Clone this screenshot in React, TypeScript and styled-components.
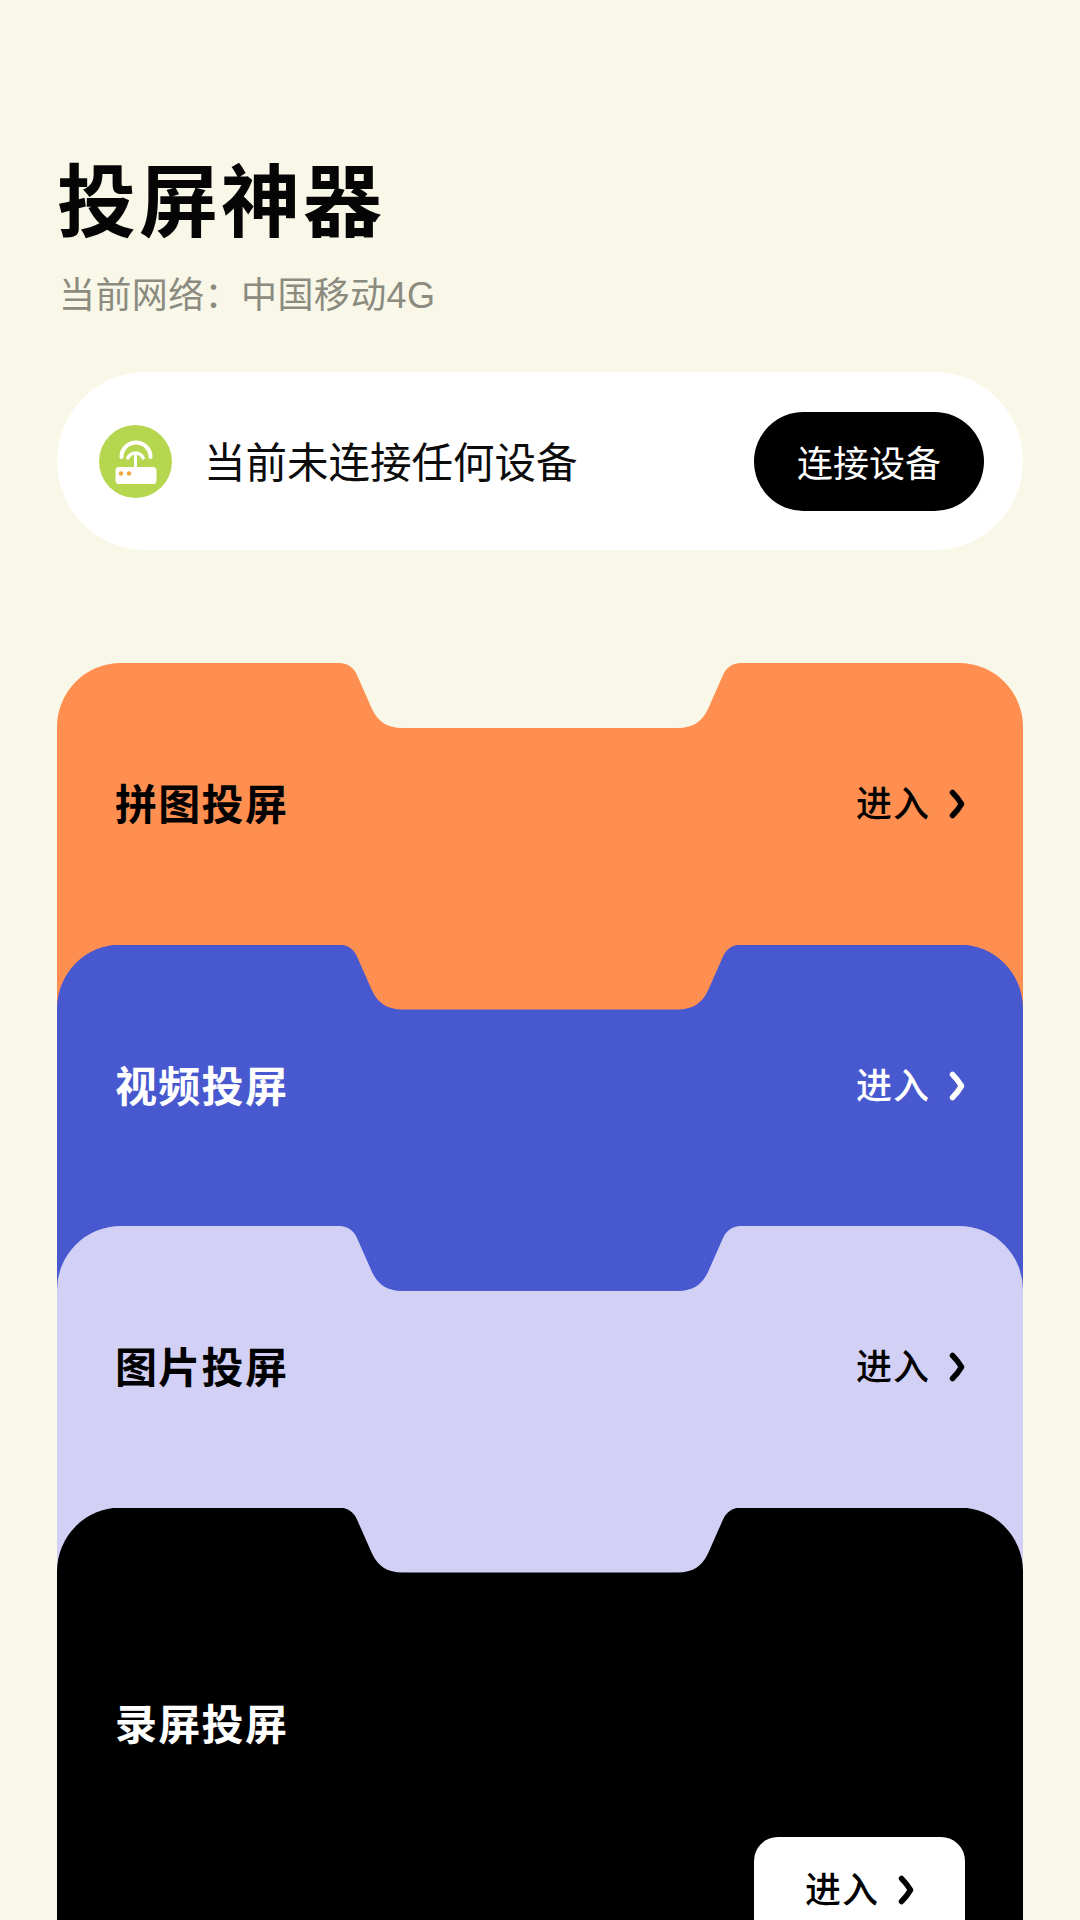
import React from "react";
import styled, { createGlobalStyle } from "styled-components";

const GlobalStyle = createGlobalStyle`
  html, body {
    margin: 0;
    padding: 0;
    height: 1920px;
    overflow: hidden;
    background: #f9f7e8;
  }
  body {
    font-family: "Liberation Sans", "Noto Sans CJK SC", sans-serif;
  }
`;

const Page = styled.main`
  width: 1080px;
  height: 1920px;
  box-sizing: border-box;
  padding: 160px 57px 0;
  overflow: hidden;
`;

const Title = styled.h1`
  margin: 0;
  font-size: 79px;
  line-height: 88px;
  font-weight: 700;
  letter-spacing: 3px;
  color: #050505;
`;

const Subtitle = styled.p`
  margin: 23px 0 0 2px;
  font-size: 36px;
  line-height: 50px;
  font-weight: 400;
  letter-spacing: 0.4px;
  color: #8b8b7f;
`;

const Status = styled.section`
  margin-top: 51px;
  height: 178px;
  border-radius: 89px;
  background: #ffffff;
  display: flex;
  align-items: center;
  padding: 0 39px 0 42px;
`;

const StatusIcon = styled.svg`
  width: 73px;
  height: 73px;
  flex: none;
`;

const StatusText = styled.span`
  margin: 6px 0 0 32px;
  flex: 1;
  font-size: 41.5px;
  line-height: 56px;
  color: #0c0c0c;
`;

const ConnectButton = styled.button`
  width: 230px;
  height: 99px;
  border: 0;
  border-radius: 50px;
  background: #000000;
  color: #ffffff;
  font-family: inherit;
  font-size: 36px;
  padding: 0;
`;

const CardStack = styled.div`
  margin-top: 113px;
  display: flex;
  flex-direction: column;
`;

const Card = styled.article<{ $bg: string; $fg: string; $last?: boolean }>`
  width: 966px;
  height: 520px;
  flex: none;
  margin-bottom: -238.5px;
  box-sizing: border-box;
  padding: ${(p) => (p.$last ? "186px" : "111px")} 58px 0;
  background: ${(p) => p.$bg};
  color: ${(p) => p.$fg};
  clip-path: path("M0 64 A64 64 0 0 1 64 0 L282 0 C291 0 297 5 300 12 L315 46 C321 59 331 65 345 65 L621 65 C635 65 645 59 651 46 L666 12 C669 5 675 0 684 0 L902 0 A64 64 0 0 1 966 64 L966 520 L0 520 Z");
`;

const CardRow = styled.div`
  display: flex;
  align-items: center;
  justify-content: space-between;
  height: 60px;
`;

const CardLabel = styled.h2`
  margin: 4px 0 0;
  font-size: 42px;
  line-height: 60px;
  font-weight: 700;
  letter-spacing: 1.3px;
`;

const EnterLink = styled.span`
  display: flex;
  align-items: center;
  gap: 19px;
  font-size: 36px;
  line-height: 50px;
  font-weight: 500;
  letter-spacing: 1px;
`;

const EnterText = styled.span`
  padding-top: 2px;
`;

const Chevron = styled.svg`
  width: 16px;
  height: 30px;
  flex: none;
`;

const EnterButton = styled.div`
  width: 211px;
  height: 106px;
  margin: 83px 0 0 auto;
  border-radius: 24px;
  background: #ffffff;
  color: #000000;
  display: flex;
  align-items: center;
  justify-content: center;
`;

const Arrow = () => (
  <Chevron viewBox="0 0 16 30" fill="none" stroke="currentColor" strokeWidth="5.5" strokeLinecap="round" strokeLinejoin="round">
    <path d="M3.5 3.5 Q9 9 12.5 15 Q9 21 3.5 26.5" />
  </Chevron>
);

const Enter = () => (
  <EnterLink>
    <EnterText>进入</EnterText>
    <Arrow />
  </EnterLink>
);

const cards = [
  { label: "拼图投屏", bg: "#ff8f50", fg: "#000000" },
  { label: "视频投屏", bg: "#4859cf", fg: "#ffffff" },
  { label: "图片投屏", bg: "#d2d0f5", fg: "#000000" },
];

export default function App() {
  return (
    <Page>
      <GlobalStyle />
      <Title>投屏神器</Title>
      <Subtitle>当前网络：中国移动4G</Subtitle>
      <Status>
        <StatusIcon viewBox="0 0 73 73">
          <circle cx="36.5" cy="36.5" r="36.5" fill="#b6d64f" />
          <g fill="none" stroke="#fff" strokeLinecap="round">
            <path d="M22.5 32 A14.5 14.5 0 0 1 51.5 32" strokeWidth="4" />
            <path d="M28.8 33 A8.5 8.5 0 0 1 44.2 33" strokeWidth="3.4" />
            <path d="M36.5 30 V44" strokeWidth="3" />
          </g>
          <rect x="16.5" y="42" width="41" height="17" rx="3.5" fill="#fff" />
          <circle cx="22" cy="48.5" r="2.2" fill="#f4a63f" />
          <circle cx="30" cy="48.5" r="2.2" fill="#f4a63f" />
        </StatusIcon>
        <StatusText>当前未连接任何设备</StatusText>
        <ConnectButton>连接设备</ConnectButton>
      </Status>
      <CardStack>
        {cards.map((c) => (
          <Card key={c.label} $bg={c.bg} $fg={c.fg}>
            <CardRow>
              <CardLabel>{c.label}</CardLabel>
              <Enter />
            </CardRow>
          </Card>
        ))}
        <Card $bg="#000000" $fg="#ffffff" $last>
          <CardRow>
            <CardLabel>录屏投屏</CardLabel>
          </CardRow>
          <EnterButton>
            <Enter />
          </EnterButton>
        </Card>
      </CardStack>
    </Page>
  );
}
